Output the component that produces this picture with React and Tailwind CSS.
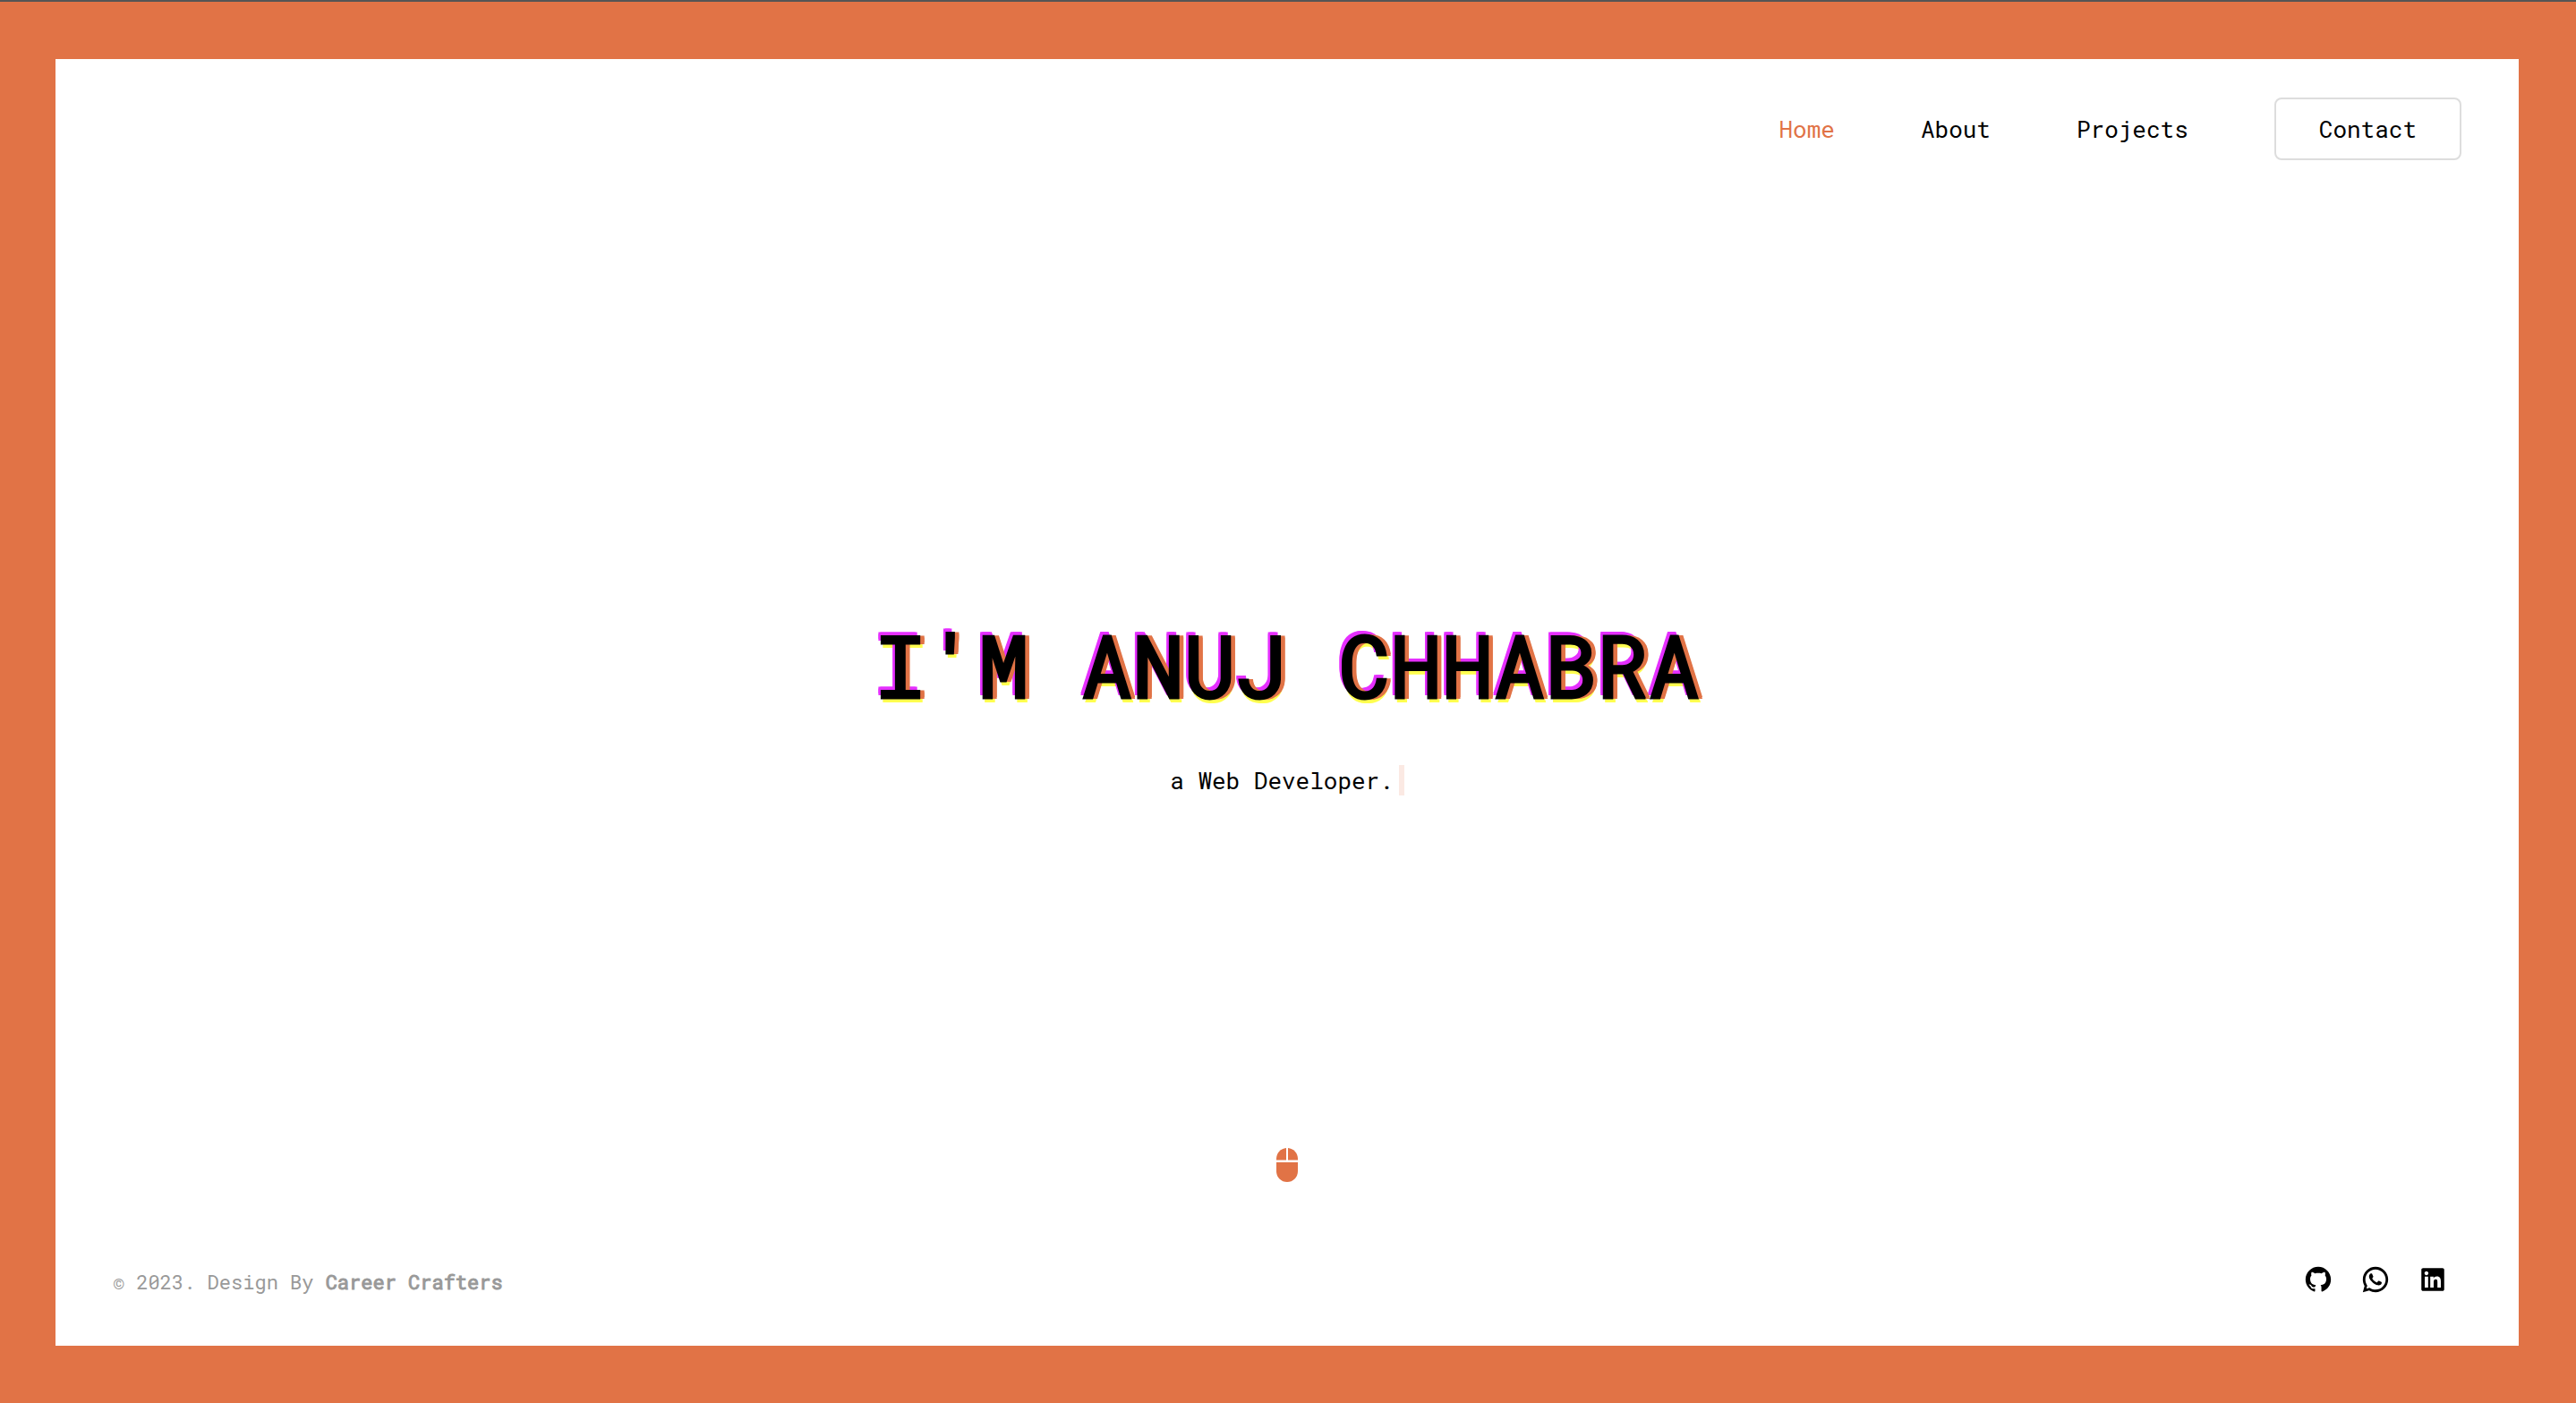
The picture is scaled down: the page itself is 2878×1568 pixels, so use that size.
import { RiGithubFill, RiWhatsappLine, RiLinkedinBoxFill } from "react-icons/ri";

const links = ["Home", "About", "Projects"];

const socials = [
  { label: "GitHub", Icon: RiGithubFill },
  { label: "WhatsApp", Icon: RiWhatsappLine },
  { label: "LinkedIn", Icon: RiLinkedinBoxFill },
];

function MouseIcon() {
  return (
    <svg viewBox="0 0 24 38" className="h-[38px] w-6" fill="currentColor" aria-hidden="true">
      <path d="M11 0C5 .5 0 5.500 0 12v1.500h11z" />
      <path d="M13 0C19 .5 24 5.500 24 12v1.500H13z" />
      <path d="M0 16h24v10a12 12 0 0 1-24 0z" />
    </svg>
  );
}

function Nav() {
  return (
    <header className="flex justify-end">
      <nav className="flex items-center gap-24">
        {links.map((name) => (
          <a key={name} href={"#" + name.toLowerCase()} className={name === "Home" ? "text-[#e17346]" : "text-black"}>
            {name}
          </a>
        ))}
        <a href="#contact" className="rounded-lg border-2 border-[#dddddd] px-12 py-4 text-black">
          Contact
        </a>
      </nav>
    </header>
  );
}

export default function App() {
  return (
    <div className="flex min-h-screen flex-col border-t-2 border-[#555555] bg-[#e17346] pt-16 pr-16 pb-16 pl-[62px] font-['Roboto_Mono','DejaVu_Sans_Mono',monospace] text-[26px] leading-[34px]">
      <div className="flex grow flex-col bg-white px-16 pt-[43px] pb-[54px]">
        <Nav />
        <main className="flex grow flex-col items-center">
          <div className="flex grow flex-col items-center justify-center pt-[106px]">
            <h1 className="text-[96px] leading-[128px] font-normal text-black [-webkit-text-stroke:3px_#000000] [text-shadow:6px_-1px_#e17346,6px_1px_#e17346,-4px_-5px_#e52fff,-4px_-3px_#e52fff,-2px_-5px_#e52fff,1px_5px_#ffff4f,4px_5px_#ffff4f]">
              I'M ANUJ CHHABRA
            </h1>
            <p className="mt-12 flex items-center gap-1.5 text-black">
              a Web Developer.
              <span className="h-[34px] w-1.5 bg-[#fbe9e3]" />
            </p>
          </div>
          <a href="#about" aria-label="Scroll down" className="mb-[92px] text-[#e17346]">
            <MouseIcon />
          </a>
        </main>
        <footer className="flex items-start justify-between">
          <p className="pt-[3px] text-[22px] text-[#999999]">
            © 2023. Design By{" "}
            <b className="font-normal [-webkit-text-stroke:1px_#999999]">Career Crafters</b>
          </p>
          <div className="mr-[15px] flex gap-[30px] text-black">
            {socials.map(({ label, Icon }) => (
              <a key={label} href={"#" + label.toLowerCase()} aria-label={label}>
                <Icon className="size-[34px]" />
              </a>
            ))}
          </div>
        </footer>
      </div>
    </div>
  );
}
